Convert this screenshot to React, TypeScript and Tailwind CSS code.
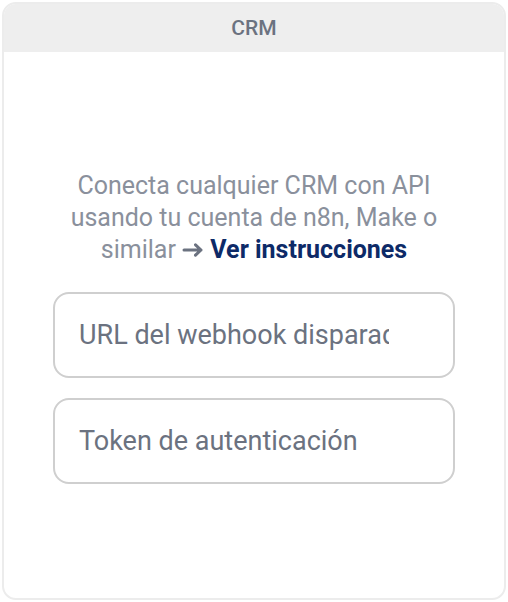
import React from "react";

export default function App() {
  return (
    <div className="w-[508px] h-[602px] bg-white p-[2px]" style={{ fontFamily: "Roboto, 'Liberation Sans', sans-serif" }}>
      <div className="h-full w-full border-2 border-[#ececec] rounded-[14px] overflow-hidden flex flex-col bg-white">
        <div className="h-[48px] bg-[#eeeeee] flex items-center justify-center shrink-0 pt-[2px]">
          <span className="text-[21px] text-[#6b7280] font-medium">CRM</span>
        </div>
        <div className="flex-1 flex flex-col items-center justify-center pt-[4px]">
          <div className="w-[402px] flex flex-col">
            <p className="text-[25px] leading-[32px] text-[#8a909c] text-center px-1">
              Conecta cualquier CRM con API usando tu cuenta de n8n, Make o similar{" "}
              <svg width="22" height="14" viewBox="0 0 22 14" className="inline-block align-middle mb-[3px]" fill="none" stroke="#6b7280" strokeWidth="3" strokeLinecap="round" strokeLinejoin="round">
                <path d="M2 7h17M13.5 1.8L19 7l-5.5 5.2" />
              </svg>{" "}
              <span className="font-bold text-[#0d2a67]">Ver instrucciones</span>
            </p>
            <div className="mt-[26px] flex flex-col gap-[20px]">
              <div className="h-[86px] border-2 border-[#cfcfcf] rounded-[16px] flex items-center pl-[24px] pr-[64px] overflow-hidden">
                <span className="text-[27px] text-[#6b7280] whitespace-nowrap overflow-hidden block">URL del webhook disparador</span>
              </div>
              <div className="h-[86px] border-2 border-[#cfcfcf] rounded-[16px] flex items-center pl-[24px] pr-[64px] overflow-hidden">
                <span className="text-[27px] text-[#6b7280] whitespace-nowrap overflow-hidden block">Token de autenticación</span>
              </div>
            </div>
          </div>
        </div>
      </div>
    </div>
  );
}
